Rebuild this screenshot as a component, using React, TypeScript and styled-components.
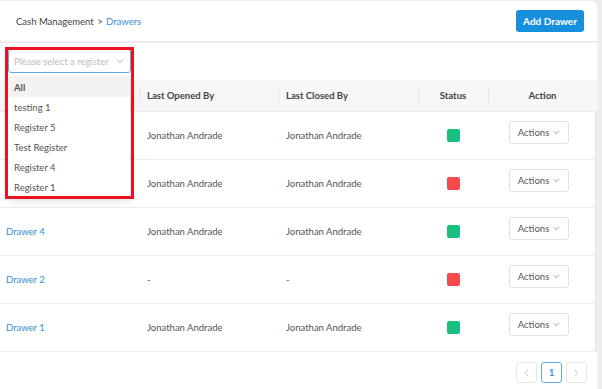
import React from 'react';
import styled, { createGlobalStyle } from 'styled-components';

interface Drawer {
  id: string;
  name: string;
  openedBy: string;
  closedBy: string;
  open: boolean;
}

const drawers: Drawer[] = [
  { id: 'd6', name: 'Drawer 6', openedBy: 'Jonathan Andrade', closedBy: 'Jonathan Andrade', open: true },
  { id: 'd5', name: 'Drawer 5', openedBy: 'Jonathan Andrade', closedBy: 'Jonathan Andrade', open: false },
  { id: 'd4', name: 'Drawer 4', openedBy: 'Jonathan Andrade', closedBy: 'Jonathan Andrade', open: true },
  { id: 'd2', name: 'Drawer 2', openedBy: '-', closedBy: '-', open: false },
  { id: 'd1', name: 'Drawer 1', openedBy: 'Jonathan Andrade', closedBy: 'Jonathan Andrade', open: true },
];

const registers = ['All', 'testing 1', 'Register 5', 'Test Register', 'Register 4', 'Register 1'];

const Chevron = ({ size = 8, color = '#9a9a9a' }: { size?: number; color?: string }) => (
  <svg width={size} height={size} viewBox="0 0 10 10" fill="none">
    <path d="M1.5 3.5 L5 7 L8.5 3.5" stroke={color} strokeWidth="1.1" strokeLinecap="round" strokeLinejoin="round" />
  </svg>
);

const Arrow = ({ dir }: { dir: 'left' | 'right' }) => (
  <svg width="7" height="8" viewBox="0 0 7 10" fill="none">
    <path
      d={dir === 'left' ? 'M5 1.5 L2 5 L5 8.5' : 'M2 1.5 L5 5 L2 8.5'}
      stroke="#c4c4c4"
      strokeWidth="1.1"
      strokeLinecap="round"
      strokeLinejoin="round"
    />
  </svg>
);

export default function App() {
  return (
    <>
      <GlobalStyle />
      <Card>
        <Header>
          <Breadcrumb>
            Cash Management <Sep>&gt;</Sep> <Current>Drawers</Current>
          </Breadcrumb>
          <PrimaryButton>Add Drawer</PrimaryButton>
        </Header>

        <FilterBar>
          <Select>
            <Placeholder>Please select a register</Placeholder>
            <Chevron />
          </Select>
        </FilterBar>

        <TableHead>
          <HeadCell>Drawer</HeadCell>
          <HeadCell divider>Last Opened By</HeadCell>
          <HeadCell divider>Last Closed By</HeadCell>
          <HeadCell divider center>Status</HeadCell>
          <HeadCell divider center>Action</HeadCell>
        </TableHead>

        <BodyWrap>
          <Rows>
            {drawers.map((d) => (
              <Row key={d.id}>
                <Cell>
                  <DrawerLink>{d.name}</DrawerLink>
                </Cell>
                <Cell>{d.openedBy}</Cell>
                <Cell>{d.closedBy}</Cell>
                <Cell center>
                  <StatusDot open={d.open} />
                </Cell>
                <Cell center>
                  <ActionsButton>
                    Actions <Chevron size={7} color="#888" />
                  </ActionsButton>
                </Cell>
              </Row>
            ))}
          </Rows>
          <ScrollTrack />
        </BodyWrap>

        <Pagination>
          <PageButton disabled>
            <Arrow dir="left" />
          </PageButton>
          <PageButton active>1</PageButton>
          <PageButton disabled>
            <Arrow dir="right" />
          </PageButton>
        </Pagination>

        <Dropdown>
          {registers.map((r, i) => (
            <Option key={r} active={i === 0}>
              {r}
            </Option>
          ))}
        </Dropdown>
        <Highlight />
      </Card>
    </>
  );
}

const GlobalStyle = createGlobalStyle`
  body {
    margin: 0;
    background: #eeeeee;
    font-family: Lato, "Open Sans", sans-serif;
    color: #555;
  }
`;

const Card = styled.div`
  position: relative;
  margin: 1px 5px 0 0;
  height: 388px;
  background: #fff;
  border-top-right-radius: 6px;
  overflow: hidden;
`;

const Header = styled.div`
  height: 40px;
  display: flex;
  align-items: center;
  justify-content: space-between;
  padding: 0 13px 0 16px;
  border-bottom: 2px solid #ececec;
`;

const Breadcrumb = styled.div`
  font-size: 9.5px;
  color: #3f3f3f;
`;

const Sep = styled.span`
  margin: 0 1px;
`;

const Current = styled.span`
  color: #2f8fdc;
`;

const PrimaryButton = styled.button`
  width: 68px;
  height: 22px;
  border: none;
  border-radius: 3px;
  background: #178fdd;
  color: #fff;
  font-family: inherit;
  font-size: 10px;
  font-weight: 700;
  padding: 0;
`;

const FilterBar = styled.div`
  padding: 6px 0 7px 8px;
`;

const Select = styled.div`
  width: 110px;
  height: 22px;
  border: 1px solid #5eaae6;
  border-radius: 3px;
  display: flex;
  align-items: center;
  justify-content: space-between;
  padding: 0 6px 0 5px;
`;

const Placeholder = styled.span`
  font-size: 9.5px;
  color: #bdbdbd;
`;

const TableHead = styled.div`
  display: grid;
  grid-template-columns: 139px 139px 140px 70px 109px;
  height: 31px;
  background: #f7f7f7;
  border-bottom: 1px solid #eaeaea;
`;

const HeadCell = styled.div<{ divider?: boolean; center?: boolean }>`
  position: relative;
  display: flex;
  align-items: center;
  justify-content: ${(p) => (p.center ? 'center' : 'flex-start')};
  padding-left: ${(p) => (p.center ? '0' : '8px')};
  font-size: 9.5px;
  font-weight: 700;
  color: #444;

  &::before {
    content: '';
    display: ${(p) => (p.divider ? 'block' : 'none')};
    position: absolute;
    left: 0;
    top: 8px;
    bottom: 8px;
    width: 1px;
    background: #e6e6e6;
  }
`;

const BodyWrap = styled.div`
  display: flex;
`;

const Rows = styled.div`
  width: 595px;
`;

const ScrollTrack = styled.div`
  flex: 1;
  background: #f0f0f0;
  border-left: 1px solid #e4e4e4;
`;

const Row = styled.div`
  display: grid;
  grid-template-columns: 139px 139px 140px 70px 107px;
  height: 47px;
  border-bottom: 1px solid #ececec;
`;

const Cell = styled.div<{ center?: boolean }>`
  display: flex;
  align-items: center;
  justify-content: ${(p) => (p.center ? 'center' : 'flex-start')};
  padding-left: ${(p) => (p.center ? '0' : '8px')};
  font-size: 9.5px;
  color: #555;
`;

const DrawerLink = styled.span`
  margin-left: -2px;
  color: #2f8fdc;
`;

const StatusDot = styled.span<{ open: boolean }>`
  display: block;
  width: 13px;
  height: 13px;
  border-radius: 2px;
  background: ${(p) => (p.open ? '#19c081' : '#f64a4a')};
`;

const ActionsButton = styled.div`
  width: 58px;
  height: 21px;
  margin-right: 5px;
  margin-top: -6px;
  border: 1px solid #e1e1e1;
  border-radius: 3px;
  display: flex;
  align-items: center;
  justify-content: center;
  gap: 4px;
  font-size: 9.5px;
  color: #555;
`;

const Pagination = styled.div`
  display: flex;
  justify-content: flex-end;
  gap: 4px;
  padding: 10px 10px 0 0;
`;

const PageButton = styled.div<{ active?: boolean; disabled?: boolean }>`
  width: 19px;
  height: 19px;
  border: 1px solid ${(p) => (p.active ? '#5eaae6' : '#e6e6e6')};
  border-radius: 3px;
  display: flex;
  align-items: center;
  justify-content: center;
  font-size: 9px;
  font-weight: 700;
  color: #2f8fdc;
`;

const Dropdown = styled.div`
  position: absolute;
  left: 8px;
  top: 76px;
  width: 122px;
  background: #fff;
  box-shadow: 0 3px 8px rgba(0, 0, 0, 0.15);
  border-radius: 2px;
`;

const Option = styled.div<{ active?: boolean }>`
  height: 20px;
  display: flex;
  align-items: center;
  padding-left: 6px;
  font-size: 9.5px;
  color: #555;
  background: ${(p) => (p.active ? '#f2f2f2' : 'transparent')};
  font-weight: ${(p) => (p.active ? 700 : 400)};
`;

const Highlight = styled.div`
  position: absolute;
  left: 5px;
  top: 46px;
  width: 123px;
  height: 146px;
  border: 3px solid #e8131f;
  pointer-events: none;
`;
